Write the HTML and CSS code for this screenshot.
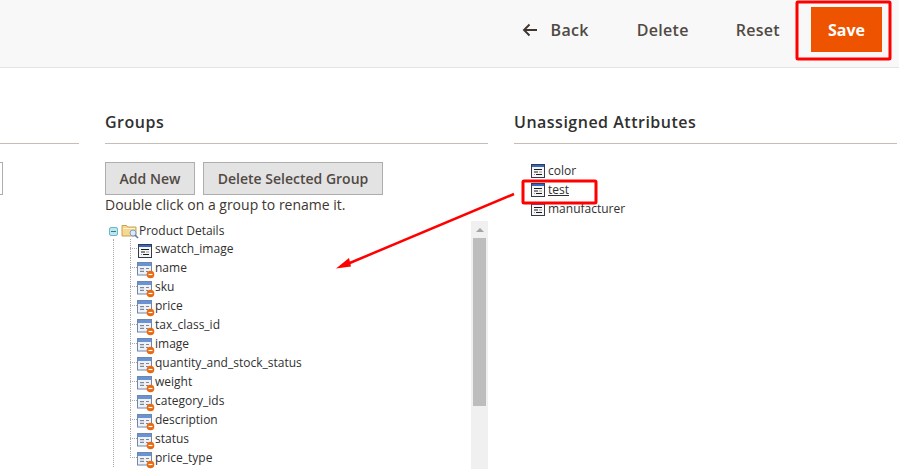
FILE: index.html
```html
<!DOCTYPE html>
<html lang="en">
<head>
<meta charset="utf-8">
<title>Attribute Set</title>
<link rel="stylesheet" href="styles.css">
</head>
<body>
<svg width="0" height="0" class="defs">
  <defs>
    <symbol id="attr" viewBox="0 0 14 14">
      <rect x="0.5" y="0.5" width="13" height="13" fill="#f6f6f6" stroke="#333b4d"/>
      <rect x="1" y="1" width="12" height="2" fill="#3568c4"/>
      <path d="M3 5.500h8M3 8h4M5 10.500h6" stroke="#1c1c1c" fill="none"/>
      <path d="M8 8h3M3 10.500h1" stroke="#999" fill="none"/>
    </symbol>
    <symbol id="attr-sys" viewBox="0 0 18 17">
      <rect x="0.5" y="0.5" width="14" height="12.500" fill="#eef1f6" stroke="#7186ad"/>
      <rect x="1" y="1" width="13" height="3" fill="#6a93d6"/>
      <path d="M3 6.500h4M3 9.500h4M9 6.500h3M9 9.500h2" stroke="#7f8797" fill="none"/>
      <path d="M3 8h4" stroke="#b9c0cc" fill="none"/>
      <circle cx="13.500" cy="12.500" r="3.800" fill="#e8690f"/>
      <path d="M11.500 12.500h4" stroke="#fff" stroke-width="1.200"/>
    </symbol>
  </defs>
</svg>
<header class="topbar">
  <button class="action back"><svg class="back-icon" width="16" height="14" viewBox="0 0 16 14"><path d="M15 7H2M7.500 1.500 2 7l5.500 5.500" fill="none" stroke="#41362f" stroke-width="1.900"/></svg>Back</button>
  <button class="action">Delete</button>
  <button class="action">Reset</button>
  <button class="save">Save</button>
</header>
<main class="columns">
  <section class="col col-left">
    <div class="col-title">&nbsp;</div>
    <div class="stub-input"></div>
  </section>
  <section class="col col-groups">
    <h2 class="col-title">Groups</h2>
    <div class="btn-row">
      <button class="btn btn-add">Add New</button>
      <button class="btn btn-del">Delete Selected Group</button>
    </div>
    <p class="hint">Double click on a group to rename it.</p>
    <div class="tree-box">
      <div class="tree">
        <div class="tree-root">
          <span class="toggle"></span>
          <svg class="folder" width="18" height="16" viewBox="0 0 18 16">
            <path d="M1 2.500h4.500l1 1.500H15v9H1z" fill="#f6d88e" stroke="#c6a257"/>
            <path d="M2 5.500h12" stroke="#fdf3d2" fill="none"/>
            <circle cx="12" cy="10" r="3" fill="#dfe9f5" stroke="#7f9cc0"/>
            <path d="M14 12l3 3" stroke="#5f7fa8" stroke-width="1.600"/>
          </svg>
          <span>Product Details</span>
        </div>
        <div class="tree-branch">
          <ul class="tree-list">
            <li><svg class="ico"><use href="#attr"/></svg>swatch_image</li>
            <li><svg class="ico-sys"><use href="#attr-sys"/></svg>name</li>
            <li><svg class="ico-sys"><use href="#attr-sys"/></svg>sku</li>
            <li><svg class="ico-sys"><use href="#attr-sys"/></svg>price</li>
            <li><svg class="ico-sys"><use href="#attr-sys"/></svg>tax_class_id</li>
            <li><svg class="ico-sys"><use href="#attr-sys"/></svg>image</li>
            <li><svg class="ico-sys"><use href="#attr-sys"/></svg>quantity_and_stock_status</li>
            <li><svg class="ico-sys"><use href="#attr-sys"/></svg>weight</li>
            <li><svg class="ico-sys"><use href="#attr-sys"/></svg>category_ids</li>
            <li><svg class="ico-sys"><use href="#attr-sys"/></svg>description</li>
            <li><svg class="ico-sys"><use href="#attr-sys"/></svg>status</li>
            <li><svg class="ico-sys"><use href="#attr-sys"/></svg>price_type</li>
          </ul>
        </div>
      </div>
      <div class="scrollbar">
        <div class="scroll-up"></div>
        <div class="scroll-thumb"></div>
      </div>
    </div>
  </section>
  <section class="col col-unassigned">
    <h2 class="col-title">Unassigned Attributes</h2>
    <ul class="plain-list">
      <li><svg class="ico"><use href="#attr"/></svg>color</li>
      <li><svg class="ico"><use href="#attr"/></svg><span class="link">test</span></li>
      <li><svg class="ico"><use href="#attr"/></svg>manufacturer</li>
    </ul>
  </section>
</main>
<svg class="annotations" width="899" height="469" viewBox="0 0 899 469">
  <rect x="797" y="2" width="93" height="57" rx="1" fill="none" stroke="#f00" stroke-width="3"/>
  <rect x="523" y="181" width="73" height="22" rx="1" fill="none" stroke="#f00" stroke-width="3"/>
  <path d="M514 194 345 265" stroke="#f00" stroke-width="2.500" fill="none"/>
  <path d="M336 268.500 349 258 351 266.500z" fill="#f00"/>
</svg>
</body>
</html>
```
FILE: styles.css
```css
* { box-sizing: border-box; }
html, body { margin: 0; padding: 0; }
body {
  position: relative;
  width: 899px;
  height: 469px;
  overflow: hidden;
  background: #fff;
  color: #41362f;
  font-family: "Open Sans", sans-serif;
  font-size: 12px;
}
.defs { position: absolute; }
.topbar {
  display: flex;
  align-items: center;
  justify-content: flex-end;
  height: 68px;
  padding: 0 17px 8px 0;
  background: #f8f8f8;
  border-bottom: 1px solid #e3e3e3;
}
.action {
  display: flex;
  align-items: center;
  border: 0;
  padding: 0;
  margin-right: 47px;
  background: none;
  color: #514943;
  font: 600 16px "Open Sans", sans-serif;
  letter-spacing: .3px;
}
.action.back { margin-right: 48px; }
.action:nth-child(3) { margin-right: 31px; }
.back-icon { margin-right: 13px; }
.save {
  width: 71px;
  height: 45px;
  border: 0;
  padding: 0;
  background: #ee5300;
  color: #fff;
  font: 700 16px "Open Sans", sans-serif;
}
.columns {
  display: flex;
  gap: 26px;
  padding-top: 43px;
}
.col { flex: 0 0 383px; }
.col-left { margin-left: -304px; }
.col-title {
  height: 33px;
  margin: 0;
  border-bottom: 1px solid #c5bdb6;
  color: #303030;
  font-size: 16px;
  font-weight: 600;
  line-height: 22px;
  letter-spacing: .5px;
}
.stub-input {
  width: 307px;
  height: 33px;
  margin-top: 18px;
  background: #fff;
  border: 1px solid #adadad;
}
.btn-row {
  display: flex;
  gap: 8px;
  margin-top: 18px;
}
.btn {
  height: 33px;
  padding: 0;
  background: #e3e3e3;
  border: 1px solid #adadad;
  color: #514943;
  font: 600 14px "Open Sans", sans-serif;
}
.btn-add { width: 90px; }
.btn-del { width: 180px; }
.hint {
  margin: 0;
  font-size: 14px;
  line-height: 20px;
  color: #41362f;
}
.tree-box {
  display: flex;
  height: 248px;
  margin-top: 6px;
}
.tree {
  flex: 1;
  color: #303030;
}
.tree-root {
  display: flex;
  align-items: center;
  height: 19px;
  padding-left: 4px;
}
.toggle {
  position: relative;
  width: 9px;
  height: 9px;
  margin: 2px 3px 0 0;
  background: #bfe6ee;
  border: 1px solid #6fb6c6;
  border-radius: 2px;
}
.toggle::after {
  content: "";
  position: absolute;
  left: 1px;
  top: 3px;
  width: 5px;
  height: 1px;
  background: #2f7f93;
}
.tree-branch {
  margin: -1px 0 0 8px;
  padding-left: 16px;
  border-left: 1px dotted #aaa;
}
.tree-list {
  list-style: none;
  margin: 0;
  padding: 0;
}
.tree-list li {
  position: relative;
  display: flex;
  height: 19px;
  padding-left: 7px;
  line-height: 19px;
  white-space: nowrap;
}
.tree-list li::before {
  content: "";
  position: absolute;
  left: 0;
  top: 9px;
  width: 7px;
  border-top: 1px dotted #aaa;
}
.tree-list li::after {
  content: "";
  position: absolute;
  left: 0;
  top: 0;
  height: 100%;
  border-left: 1px dotted #aaa;
}
.tree-list li:last-child::after { height: 10px; }
.ico {
  flex: none;
  width: 14px;
  height: 14px;
  margin: 5px 3px 0 1px;
}
.ico-sys {
  flex: none;
  width: 18px;
  height: 17px;
  margin-top: 4px;
}
.scrollbar {
  flex: 0 0 17px;
  padding: 0 2px;
  background: #f0f0f0;
}
.scroll-up {
  width: 0;
  height: 0;
  margin: 7px auto 6px;
  border-left: 4px solid transparent;
  border-right: 4px solid transparent;
  border-bottom: 4px solid #a3a3a3;
}
.scroll-thumb {
  height: 168px;
  background: #bdbdbd;
}
.plain-list {
  list-style: none;
  margin: 17px 0 0 17px;
  padding: 0;
  color: #303030;
}
.plain-list li {
  display: flex;
  align-items: center;
  height: 19px;
}
.plain-list .ico { margin: 0 3px 0 0; }
.link {
  color: #303030;
  text-decoration: underline;
}
.annotations {
  position: absolute;
  left: 0;
  top: 0;
}
```
